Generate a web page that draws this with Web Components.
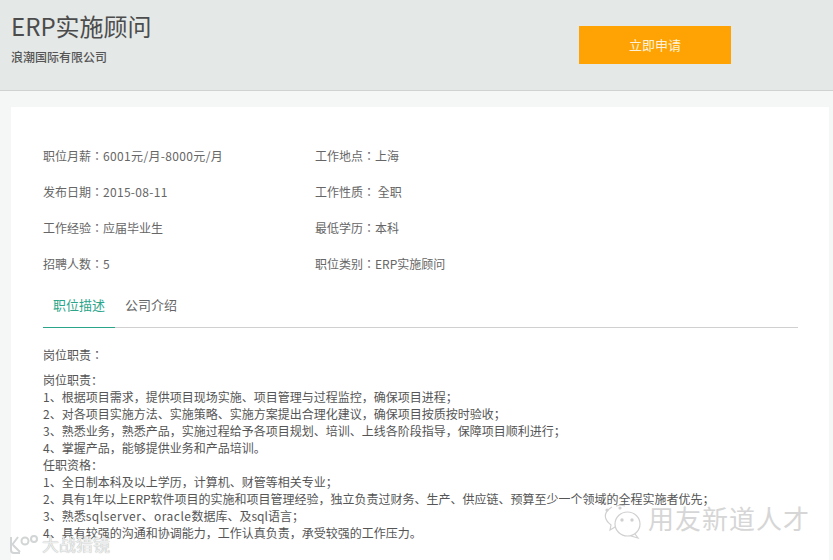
<!DOCTYPE html>
<html lang="zh-CN">
<head>
<meta charset="utf-8">
<title>ERP实施顾问</title>
<style>
html, body { margin: 0; padding: 0; }
body {
    width: 833px;
    height: 560px;
    overflow: hidden;
    background: #f5f6f6;
    font-family: "Noto Sans CJK SC", "Liberation Sans", sans-serif;
    color: #555;
}
</style>
</head>
<body>
<job-header company="浪潮国际有限公司" action="立即申请">ERP实施顾问</job-header>
<job-card>
    <job-info lang="zh-TW">
        <span>职位月薪：<span style="letter-spacing:.35px">6001元/月-8000元/月</span></span>
        <span>工作地点：上海</span>
        <span>发布日期：<span style="letter-spacing:.3px">2015-08-11</span></span>
        <span>工作性质： 全职</span>
        <span>工作经验：应届毕业生</span>
        <span>最低学历：本科</span>
        <span>招聘人数：5</span>
        <span>职位类别：ERP实施顾问</span>
    </job-info>
    <job-tabs first="职位描述" second="公司介绍"></job-tabs>
    <job-desc>
        <p slot="lead" lang="zh-TW">岗位职责：</p>
        <div>岗位职责：</div>
        <div>1、根据项目需求，提供项目现场实施、项目管理与过程监控，确保项目进程；</div>
        <div>2、对各项目实施方法、实施策略、实施方案提出合理化建议，确保项目按质按时验收；</div>
        <div>3、熟悉业务，熟悉产品，实施过程给予各项目规划、培训、上线各阶段指导，保障项目顺利进行；</div>
        <div>4、掌握产品，能够提供业务和产品培训。</div>
        <div>任职资格：</div>
        <div>1、全日制本科及以上学历，计算机、财管等相关专业；</div>
        <div>2、具有1年以上ERP软件项目的实施和项目管理经验，独立负责过财务、生产、供应链、预算至少一个领域的全程实施者优先；</div>
        <div>3、熟悉<span style="letter-spacing:.5px">sqlserver、oracle</span>数据库、及sql语言；</div>
        <div>4、具有较强的沟通和协调能力，工作认真负责，承受较强的工作压力。</div>
    </job-desc>
</job-card>
<water-marks></water-marks>

<script>
class JobHeader extends HTMLElement {
    constructor() {
        super();
        this.shadowDOM = this.attachShadow({ mode: "open" });
    }
    connectedCallback() {
        this.shadowDOM.innerHTML = `
        <style>
        * { margin: 0; padding: 0; box-sizing: border-box; }
        :host {
            display: flex;
            justify-content: space-between;
            box-sizing: border-box;
            height: 91px;
            padding: 9px 102px 0 11px;
            background: #e4e8e7;
            border-bottom: 1px solid #cfd2d1;
        }
        h1 {
            font-size: 24px;
            font-weight: 400;
            line-height: 34px;
            color: #4c4c4c;
        }
        p {
            font-size: 12px;
            font-weight: 500;
            line-height: 18px;
            margin-top: 5px;
            color: #555;
        }
        button {
            width: 152px;
            height: 38px;
            margin-top: 17px;
            padding-bottom: 2px;
            border: 0;
            background: #ffa305;
            color: #fdf3dc;
            font: inherit;
            font-size: 13px;
        }
        </style>
        <div>
            <h1><slot></slot></h1>
            <p>${this.getAttribute("company")}</p>
        </div>
        <button>${this.getAttribute("action")}</button>
        `;
    }
}

class JobCard extends HTMLElement {
    constructor() {
        super();
        this.attachShadow({ mode: "open" }).innerHTML = `
        <style>
        :host {
            display: block;
            height: 453px;
            margin: 16px 4px 0 11px;
            padding: 31px 31px 0 32px;
            background: #fff;
            box-sizing: border-box;
        }
        </style>
        <slot></slot>
        `;
    }
}

class JobInfo extends HTMLElement {
    constructor() {
        super();
        this.attachShadow({ mode: "open" }).innerHTML = `
        <style>
        :host {
            display: grid;
            grid-template-columns: 272px 1fr;
            grid-auto-rows: 36px;
            font-family: "Noto Sans CJK TC", "Liberation Sans", sans-serif;
            font-size: 12px;
            line-height: 36px;
            color: #666;
        }
        </style>
        <slot></slot>
        `;
    }
}

class JobTabs extends HTMLElement {
    constructor() {
        super();
        this.shadowDOM = this.attachShadow({ mode: "open" });
    }
    connectedCallback() {
        this.shadowDOM.innerHTML = `
        <style>
        :host {
            display: flex;
            height: 45px;
            font-size: 13px;
            border-bottom: 1px solid #d0d0d0;
            color: #666;
        }
        div {
            width: 72px;
            height: 45px;
            line-height: 46px;
            text-align: center;
        }
        .on {
            color: #2aa58a;
            border-bottom: 1px solid #2aa58a;
            margin-right: 10px;
        }
        .off { width: 52px; }
        </style>
        <div class="on">${this.getAttribute("first")}</div>
        <div class="off">${this.getAttribute("second")}</div>
        `;
    }
}

class JobDesc extends HTMLElement {
    constructor() {
        super();
        this.attachShadow({ mode: "open" }).innerHTML = `
        <style>
        :host {
            display: block;
            padding-top: 18px;
            font-size: 12px;
            line-height: 17px;
            color: #555;
            white-space: nowrap;
        }
        .lead { display: block; margin-bottom: 8px; }
        ::slotted(p) { margin: 0; font-family: "Noto Sans CJK TC", sans-serif; }
        </style>
        <slot class="lead" name="lead"></slot>
        <slot></slot>
        `;
    }
}

// the two image watermarks lie over the text
class WaterMarks extends HTMLElement {
    constructor() {
        super();
        this.attachShadow({ mode: "open" }).innerHTML = `
        <style>
        :host { display: block; }
        .left, .right {
            position: absolute;
            display: flex;
            align-items: center;
            white-space: nowrap;
        }
        .left {
            left: 9px;
            top: 533px;
            color: #eceeee;
            font-size: 17px;
            line-height: 22px;
            text-shadow: 0 0 1px #999;
        }
        .right { left: 604px; top: 503px; color: #d6d6d6; font-size: 26px; letter-spacing: 1px; }
        .left svg { margin-right: 3px; }
        .right svg { margin-right: 4px; }
        .right span { margin-top: -8px; }
        </style>
        <div class="left">
            <svg width="30" height="20" viewBox="0 0 30 20" fill="none" stroke="#d2d5d5" stroke-width="2">
                <path d="M2 3v13c0 2 1 3 3 3h6M3 11l6-8M4 11l7 7"/>
                <circle cx="16" cy="7" r="3.5"/>
                <circle cx="25" cy="5" r="3"/>
            </svg>
            <span>大战猎镜</span>
        </div>
        <div class="right">
            <svg width="40" height="36" viewBox="0 0 40 36" fill="none" stroke="#d0d0d0" stroke-width="1.2">
                <path d="M8 4C3 7 0 11 2 16c1 3 3 4 5 6l-1 5 5-3"/>
                <path d="M12 3c3-1 6-1 9 0"/>
                <ellipse cx="23.5" cy="21" rx="12.5" ry="12"/>
                <path d="M31 31l3 4-7-2"/>
                <circle cx="3" cy="7" r="1" fill="#d0d0d0"/>
                <circle cx="16" cy="5" r="1" fill="#d0d0d0"/>
                <circle cx="18" cy="17" r="1.1" fill="#c4c4c4"/>
                <circle cx="28" cy="17" r="1.1" fill="#c4c4c4"/>
            </svg>
            <span>用友新道人才</span>
        </div>
        `;
    }
}

customElements.define("job-header", JobHeader);
customElements.define("job-card", JobCard);
customElements.define("job-info", JobInfo);
customElements.define("job-tabs", JobTabs);
customElements.define("job-desc", JobDesc);
customElements.define("water-marks", WaterMarks);
</script>
</body>
</html>
